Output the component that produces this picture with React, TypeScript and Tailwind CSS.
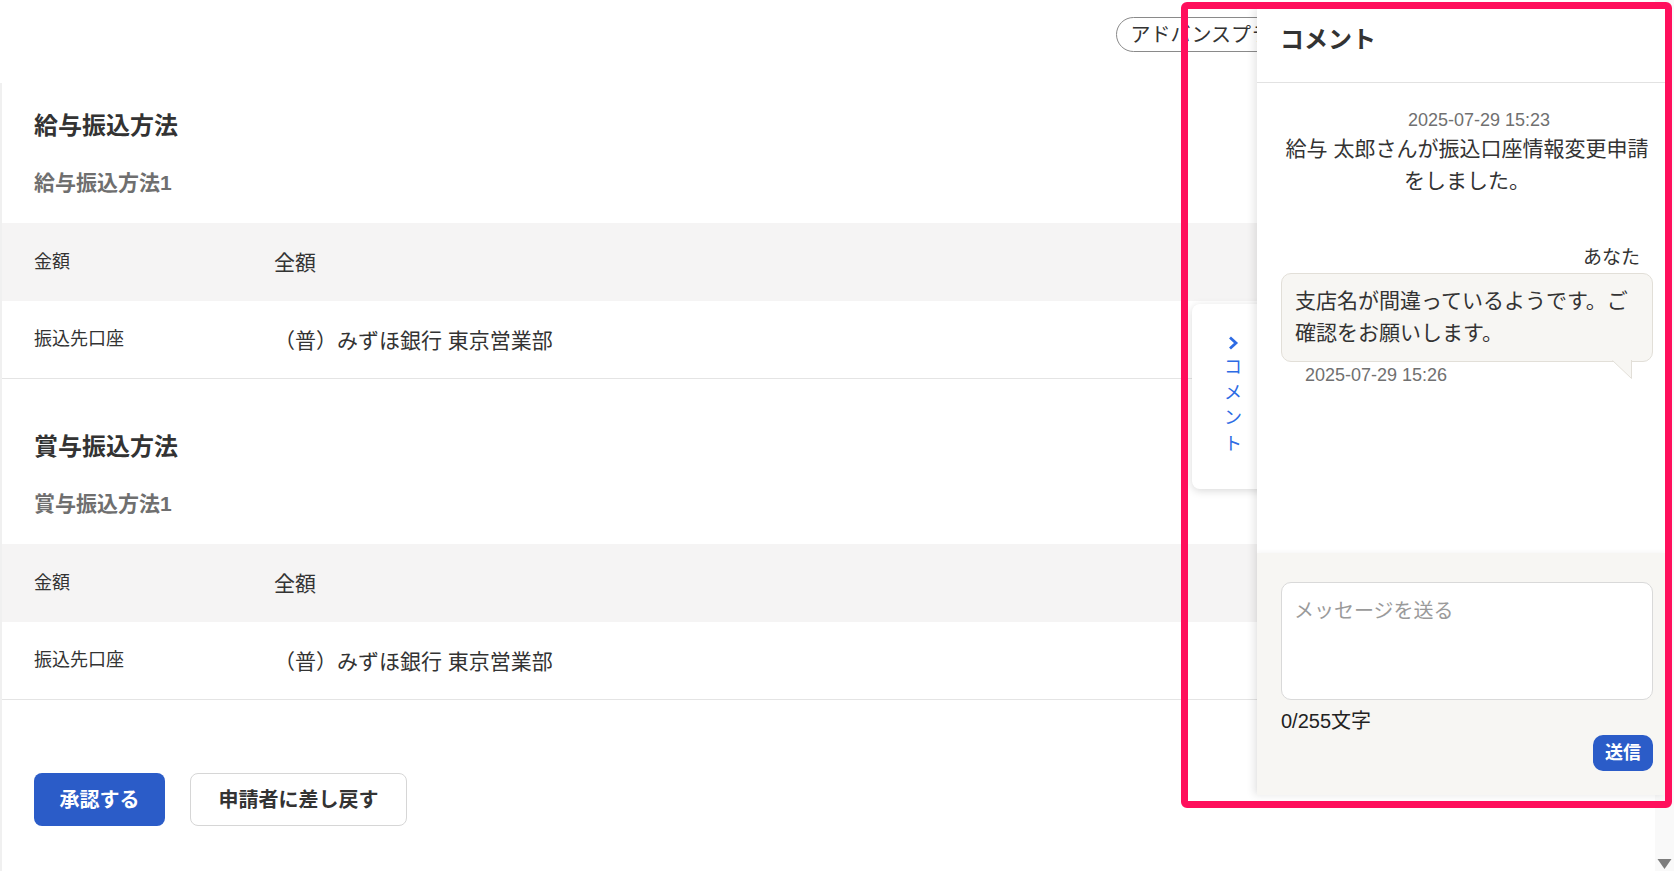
import React from "react";

const FONT = "font-['Liberation_Sans','Noto_Sans_CJK_JP',sans-serif]";

function Row({ label, value, gray }: { label: string; value: string; gray?: boolean }) {
  return (
    <div
      className={`flex h-[78px] items-center px-[32px] ${gray ? "bg-[#f5f4f4]" : "border-b border-[#e4e4e4] bg-white"}`}
    >
      <div className="w-[240px] text-[18px] text-[#333]">{label}</div>
      <div className="pt-[2px] text-[21px] text-[#333]">{value}</div>
    </div>
  );
}

function Section({ title, sub, top }: { title: string; sub: string; top: string }) {
  return (
    <section className={top}>
      <h2 className="px-[32px] text-[24px] font-bold leading-[36px] text-[#333]">{title}</h2>
      <h3 className="mt-[24px] px-[32px] text-[21px] font-bold leading-[30px] text-[#6f6f6f]">{sub}</h3>
      <div className="mt-[25px]">
        <Row label="金額" value="全額" gray />
        <Row label="振込先口座" value="（普）みずほ銀行 東京営業部" />
      </div>
    </section>
  );
}

export default function App() {
  return (
    <div className={`relative h-[871px] w-[1674px] overflow-hidden bg-white text-[#333] ${FONT}`}>
      <div className="flex h-full">
        <main className="flex flex-1 flex-col">
          <div className="flex h-[83px] items-start justify-end pr-[350px] pt-[17px]">
            <span className="flex h-[35px] items-center whitespace-nowrap rounded-full border border-[#8a8a8a] px-[13px] text-[20px] text-[#333]">
              アドバンスプラン
            </span>
          </div>
          <div className="flex-1 border-l-2 border-[#f0f0f0]">
            <Section title="給与振込方法" sub="給与振込方法1" top="pt-[25px]" />
            <Section title="賞与振込方法" sub="賞与振込方法1" top="pt-[50px]" />
            <div className="mt-[73px] flex gap-[25px] px-[32px]">
              <button className="h-[53px] w-[131px] rounded-[8px] bg-[#2b5cc8] text-[20px] font-bold text-white">
                承認する
              </button>
              <button className="h-[53px] w-[217px] rounded-[8px] border border-[#d6d6d6] bg-white text-[20px] font-bold text-[#333]">
                申請者に差し戻す
              </button>
            </div>
          </div>
        </main>
        <div className="flex w-[19px] flex-col justify-end bg-[#f9f9f9]">
          <svg width="19" height="13" viewBox="0 0 19 13">
            <polygon points="2.5,1 16.5,1 9.5,11" fill="#7d7d7d" />
          </svg>
        </div>
      </div>

      {/* collapse tab */}
      <div className="absolute left-[1192px] top-[304px] flex h-[185px] w-[82px] flex-col items-center rounded-l-[8px] bg-white pt-[31px] shadow-[0_2px_8px_rgba(0,0,0,0.15)]">
        <svg width="12" height="16" viewBox="0 0 12 16" className="ml-[-1px]">
          <polyline points="3,2.5 9,8 3,13.5" fill="none" stroke="#2d6be4" strokeWidth="2.8" />
        </svg>
        <div className="mt-[4px] flex flex-col items-center text-[18px] leading-[25.5px] text-[#2d6be4]">
          <span>コ</span>
          <span>メ</span>
          <span>ン</span>
          <span>ト</span>
        </div>
      </div>

      {/* comment panel */}
      <aside className="absolute right-[8px] top-[8px] flex h-[787px] w-[409px] flex-col bg-white shadow-[-3px_0_8px_rgba(0,0,0,0.1)]">
        <header className="h-[75px] border-b border-[#e2e2e2] pl-[23px] pt-[16px]">
          <h2 className="text-[24px] font-bold leading-[32px] text-[#333]">コメント</h2>
        </header>
        <div className="flex-1 pl-[24px] pr-[13px]">
          <div className="pl-[24px] pt-[24px] text-center text-[18px] leading-[26px] text-[#707070]">2025-07-29 15:23</div>
          <p className="text-center text-[21px] leading-[32px] text-[#333]">
            給与 太郎さんが振込口座情報変更申請をしました。
          </p>
          <div className="mt-[48px] pr-[13px] text-right text-[19px] leading-[26px] text-[#333]">あなた</div>
          <div className="relative mt-[2px] rounded-[10px] border border-[#e2dfd8] bg-[#f7f6f3] px-[13px] pb-[12px] pt-[11px] text-[21px] leading-[32px] text-[#333]">
            支店名が間違っているようです。ご確認をお願いします。
            <svg
              width="20"
              height="19"
              viewBox="0 0 20 19"
              className="absolute bottom-[-18px] right-[20px]"
            >
              <polygon points="0,0 19.5,0 19.5,18.5" fill="#f7f6f3" />
              <polyline points="0.5,0.5 19.5,18.5 19.5,0" fill="none" stroke="#e2dfd8" strokeWidth="1" />
            </svg>
          </div>
          <div className="pl-[24px] text-[18px] leading-[26px] text-[#707070]">2025-07-29 15:26</div>
        </div>
        <footer className="flex h-[242px] flex-col bg-[#f7f6f3] pl-[24px] pr-[13px] pt-[29px] shadow-[0_-2px_4px_rgba(0,0,0,0.03)]">
          <div className="h-[118px] rounded-[10px] border border-[#d9d9d9] bg-white px-[12px] pt-[13px] text-[20px] leading-[30px] text-[#9a9a9a]">
            メッセージを送る
          </div>
          <div className="mt-[6px] text-[20px] leading-[30px] text-[#222]">0/255文字</div>
          <button className="mt-[-1px] h-[36px] w-[60px] self-end rounded-[10px] bg-[#2b5cc8] text-[18px] font-bold text-white">
            送信
          </button>
        </footer>
      </aside>

      {/* pink annotation frame */}
      <div className="pointer-events-none absolute left-[1181px] right-[2px] top-[2px] h-[806px] rounded-[6px] border-[7px] border-[#ff0f5c]" />
    </div>
  );
}
